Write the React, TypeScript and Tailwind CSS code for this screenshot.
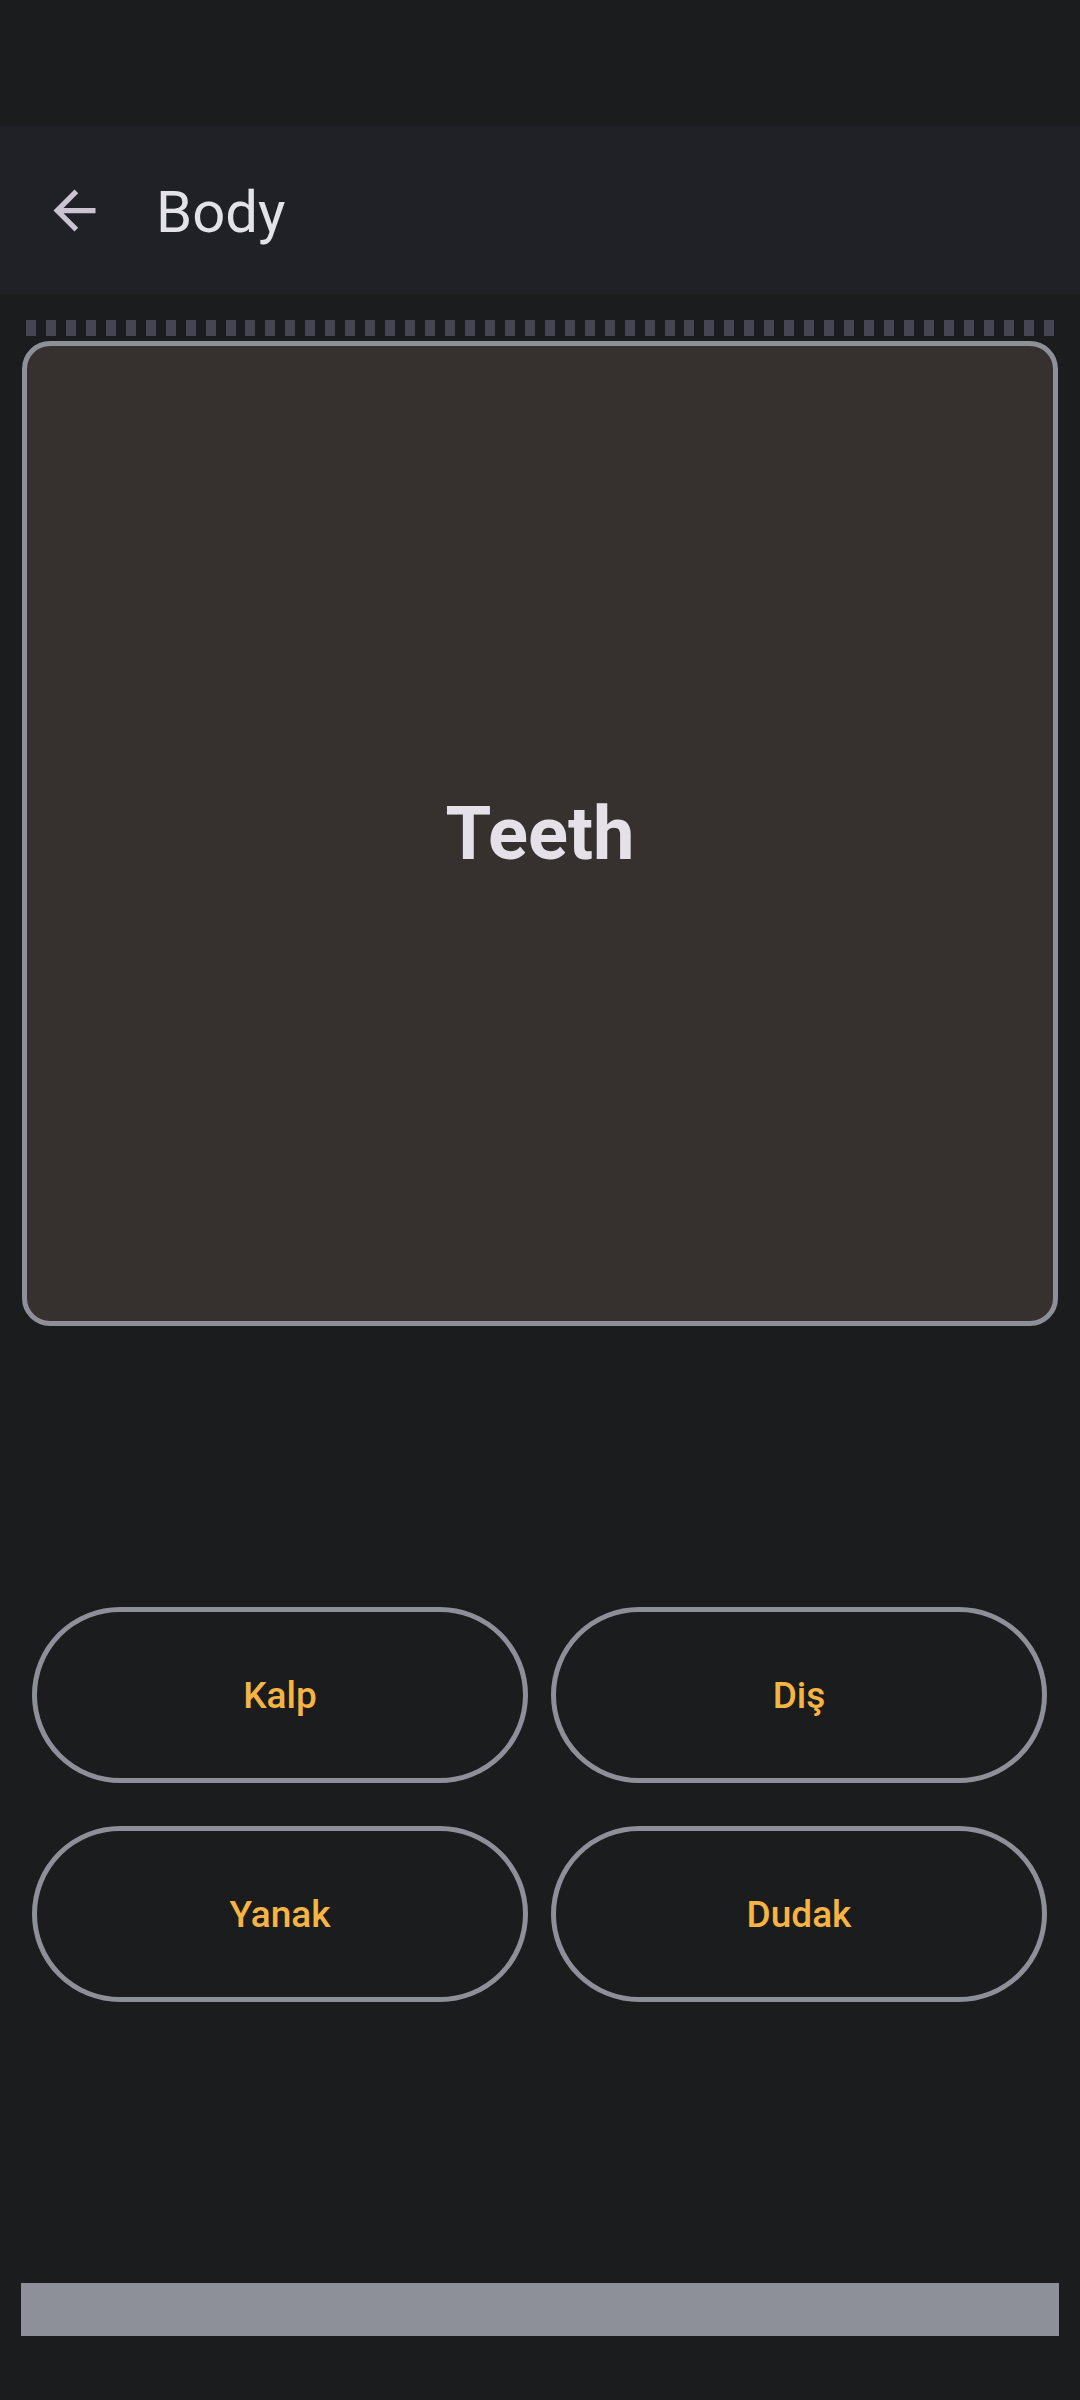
import React from "react";

const choices = ["Kalp", "Diş", "Yanak", "Dudak"];

function BackArrow() {
  return (
    <svg width="63" height="63" viewBox="0 0 24 24" fill="#cac4d0">
      <path d="M20 11H7.83l5.59-5.59L12 4l-8 8 8 8 1.41-1.41L7.83 13H20v-2z" />
    </svg>
  );
}

export default function App() {
  const dashes = Array.from({ length: 52 });
  return (
    <div
      className="w-[1080px] h-[2400px] bg-[#1b1c1e] flex flex-col"
      style={{ fontFamily: "Roboto, 'Noto Sans', sans-serif" }}
    >
      {/* status bar */}
      <div className="h-[126px] shrink-0" />

      {/* top app bar */}
      <div className="h-[168px] shrink-0 bg-[#202126] flex items-center">
        <div className="ml-[43px] w-[63px] h-[63px] flex items-center justify-center">
          <BackArrow />
        </div>
        <span className="ml-[50px] text-[58px] leading-none text-[#e3e2e8] pt-[3px]">Body</span>
      </div>

      {/* progress segments */}
      <div className="mt-[26px] ml-[26px] w-[1028px] h-[16px] flex justify-between">
        {dashes.map((_, i) => (
          <div key={i} className="w-[10px] h-[16px] bg-[#454651]" />
        ))}
      </div>

      {/* flash card */}
      <div className="mt-[5px] ml-[22px] w-[1036px] h-[985px] rounded-[28px] border-[5px] border-[#8e9099] bg-[#36312f] flex items-center justify-center">
        <span className="text-[74px] font-bold leading-none text-[#e6e1e8]">Teeth</span>
      </div>

      {/* answer options */}
      <div className="mt-[281px] ml-[32px] w-[1015px] grid grid-cols-2 gap-x-[23px] gap-y-[43px]">
        {choices.map((c) => (
          <button
            key={c}
            className="h-[176px] rounded-full border-[5px] border-[#8e9099] bg-transparent flex items-center justify-center"
          >
            <span className="text-[37px] font-medium leading-none text-[#f6b445]">{c}</span>
          </button>
        ))}
      </div>

      {/* bottom action bar */}
      <div className="mt-[281px] ml-[21px] w-[1038px] h-[53px] bg-[#8e9099]" />
    </div>
  );
}
